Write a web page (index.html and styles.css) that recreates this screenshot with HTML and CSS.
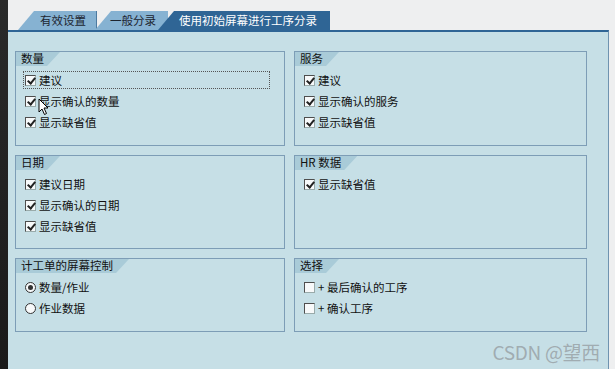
FILE: index.html
```html
<!DOCTYPE html>
<html lang="zh">
<head>
<meta charset="utf-8">
<link rel="stylesheet" href="styles.css">
</head>
<body>
<div class="frame">
  <div class="leftbar"></div>
  <div class="main">
    <div class="tabs">
      <div class="tab tab-first">有效设置</div>
      <div class="tab tab-second">一般分录</div>
      <div class="tab tab-active">使用初始屏幕进行工序分录</div>
    </div>
    <div class="panel">
      <div class="grid">
        <section class="group">
          <div class="ghead"><span>数量</span></div>
          <div class="rows">
            <div class="row focus"><span class="cb checked"></span>建议</div>
            <div class="row"><span class="cb checked"></span>显示确认的数量</div>
            <div class="row"><span class="cb checked"></span>显示缺省值</div>
          </div>
        </section>
        <section class="group">
          <div class="ghead"><span>服务</span></div>
          <div class="rows">
            <div class="row"><span class="cb checked"></span>建议</div>
            <div class="row"><span class="cb checked"></span>显示确认的服务</div>
            <div class="row"><span class="cb checked"></span>显示缺省值</div>
          </div>
        </section>
        <section class="group">
          <div class="ghead"><span>日期</span></div>
          <div class="rows">
            <div class="row"><span class="cb checked"></span>建议日期</div>
            <div class="row"><span class="cb checked"></span>显示确认的日期</div>
            <div class="row"><span class="cb checked"></span>显示缺省值</div>
          </div>
        </section>
        <section class="group">
          <div class="ghead"><span>HR 数据</span></div>
          <div class="rows">
            <div class="row"><span class="cb checked"></span>显示缺省值</div>
          </div>
        </section>
        <section class="group">
          <div class="ghead"><span>计工单的屏幕控制</span></div>
          <div class="rows">
            <div class="row"><span class="rb on"></span>数量/作业</div>
            <div class="row"><span class="rb"></span>作业数据</div>
          </div>
        </section>
        <section class="group">
          <div class="ghead"><span>选择</span></div>
          <div class="rows">
            <div class="row"><span class="cb"></span>+ 最后确认的工序</div>
            <div class="row"><span class="cb"></span>+ 确认工序</div>
          </div>
        </section>
      </div>
      <div class="watermark">CSDN @望西</div>
      <svg class="cursor" width="12" height="18" viewBox="0 0 12 18">
        <path d="M1 1 L1 14 L4 11 L6.5 16.5 L8.5 15.5 L6 10 L10 10 Z" fill="#fff" stroke="#000" stroke-width="1" stroke-linejoin="round"/>
      </svg>
    </div>
  </div>
</div>
</body>
</html>
```
FILE: styles.css
```css
html, body {
  margin: 0;
  padding: 0;
  background: #eeeff0;
}
body {
  font-family: "Noto Sans CJK SC", "DejaVu Sans", sans-serif;
  font-size: 11px;
  color: #1b1b1b;
}
.frame {
  display: flex;
  width: 615px;
  height: 369px;
  overflow: hidden;
}
.leftbar {
  width: 8px;
  flex: none;
  background: linear-gradient(#2a2a2a, #1a1a1a);
}
.main {
  flex: 1;
  display: flex;
  flex-direction: column;
  padding-right: 6px;
}
.tabs {
  height: 30px;
  display: flex;
  align-items: flex-end;
  padding-left: 10px;
  flex: none;
}
.tab {
  height: 19px;
  line-height: 18px;
  font-size: 11.5px;
  box-sizing: border-box;
  clip-path: polygon(0 100%, 16px 0, 100% 0, 100% 100%);
}
.tab-first {
  width: 79px;
  padding-left: 22px;
  background: #86b2d2;
  color: #1d2530;
  border-right: 1px solid #4c7aa0;
}
.tab-second {
  width: 73px;
  margin-left: -2px;
  padding-left: 15px;
  background: #86b2d2;
  color: #1d2530;
}
.tab-active {
  width: 172px;
  margin-left: -10px;
  padding-left: 21px;
  background: #2f6595;
  color: #ffffff;
}
.panel {
  flex: 1;
  position: relative;
  background: #c6dfe6;
  border-top: 2px solid #2f6595;
  border-right: 1px solid #6f93b0;
  padding: 19px 0 0 7px;
}
.grid {
  display: grid;
  grid-template-columns: 270px 293px;
  grid-template-rows: 95px 94px 74px;
  column-gap: 9px;
  row-gap: 9px;
}
.group {
  border: 1px solid #7d9db6;
  box-sizing: border-box;
}
.ghead {
  height: 14px;
  display: flex;
}
.ghead span {
  display: block;
  height: 14px;
  line-height: 13px;
  padding: 0 16px 0 5px;
  background: #a9cbd8;
  clip-path: polygon(0 0, 100% 0, calc(100% - 13px) 100%, 0 100%);
  font-size: 11.5px;
  color: #111;
}
.rows {
  padding: 5px 0 0 7px;
  display: flex;
  flex-direction: column;
  gap: 3px;
}
.row {
  height: 18px;
  width: 247px;
  box-sizing: border-box;
  display: flex;
  align-items: center;
  padding-left: 2px;
  gap: 3px;
  font-size: 11.5px;
  white-space: nowrap;
  color: #111;
}
.row.focus {
  outline: 1px dotted #555;
  outline-offset: -1px;
}
.cb {
  width: 11px;
  height: 11px;
  box-sizing: border-box;
  border: 1px solid #4e4e4e;
  border-right-color: #9aa;
  border-bottom-color: #9aa;
  background: #f7f9fa;
  position: relative;
  flex: none;
}
.cb.checked::after {
  content: "";
  position: absolute;
  left: 3px;
  top: 0px;
  width: 3px;
  height: 6px;
  border-right: 2px solid #222;
  border-bottom: 2px solid #222;
  transform: rotate(40deg);
}
.rb {
  width: 11px;
  height: 11px;
  box-sizing: border-box;
  border: 1px solid #333;
  border-radius: 50%;
  background: #f7f9fa;
  position: relative;
  flex: none;
}
.rb.on::after {
  content: "";
  position: absolute;
  left: 2px;
  top: 2px;
  width: 5px;
  height: 5px;
  border-radius: 50%;
  background: #333;
}
.watermark {
  position: absolute;
  right: 8px;
  bottom: 4px;
  font-family: "Noto Sans CJK SC", "DejaVu Sans", sans-serif;
  font-size: 19px;
  color: rgba(150, 158, 163, 0.8);
  letter-spacing: -0.3px;
}
.cursor {
  position: absolute;
  left: 30px;
  top: 66px;
}
```
